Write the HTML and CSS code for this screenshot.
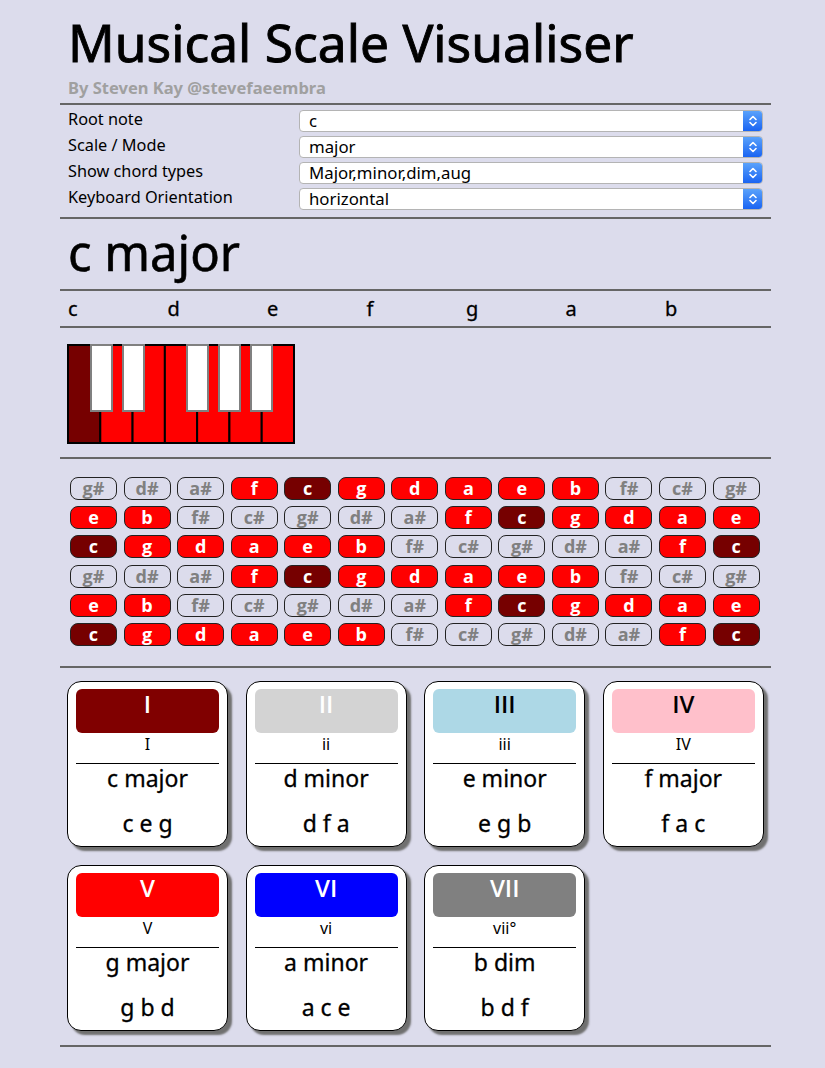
FILE: index.html
```html
<!DOCTYPE html>
<html lang="en">
<head>
<meta charset="utf-8">
<title>Musical Scale Visualiser</title>
<link rel="stylesheet" href="styles.css">
</head>
<body>
<div class="page">
  <header class="masthead">
    <h1 class="title">Musical Scale Visualiser</h1>
    <div class="byline">By Steven Kay @stevefaeembra</div>
  </header>
  <hr class="rule">
  <form class="controls">
    <div class="control-row">
      <label class="control-label">Root note</label>
      <div class="select"><select class="select-field"><option>c</option></select><span class="stepper"><svg width="12" height="16" viewBox="0 0 12 16"><path d="M3 6.5 L6 3.5 L9 6.5 M3 9.5 L6 12.5 L9 9.5" fill="none" stroke="#fff" stroke-width="1.6" stroke-linecap="round" stroke-linejoin="round"/></svg></span></div>
    </div>
    <div class="control-row">
      <label class="control-label">Scale / Mode</label>
      <div class="select"><select class="select-field"><option>major</option></select><span class="stepper"><svg width="12" height="16" viewBox="0 0 12 16"><path d="M3 6.5 L6 3.5 L9 6.5 M3 9.5 L6 12.5 L9 9.5" fill="none" stroke="#fff" stroke-width="1.6" stroke-linecap="round" stroke-linejoin="round"/></svg></span></div>
    </div>
    <div class="control-row">
      <label class="control-label">Show chord types</label>
      <div class="select"><select class="select-field"><option>Major,minor,dim,aug</option></select><span class="stepper"><svg width="12" height="16" viewBox="0 0 12 16"><path d="M3 6.5 L6 3.5 L9 6.5 M3 9.5 L6 12.5 L9 9.5" fill="none" stroke="#fff" stroke-width="1.6" stroke-linecap="round" stroke-linejoin="round"/></svg></span></div>
    </div>
    <div class="control-row">
      <label class="control-label">Keyboard Orientation</label>
      <div class="select"><select class="select-field"><option>horizontal</option></select><span class="stepper"><svg width="12" height="16" viewBox="0 0 12 16"><path d="M3 6.5 L6 3.5 L9 6.5 M3 9.5 L6 12.5 L9 9.5" fill="none" stroke="#fff" stroke-width="1.6" stroke-linecap="round" stroke-linejoin="round"/></svg></span></div>
    </div>
  </form>
  <hr class="rule">
  <h2 class="scale-name">c major</h2>
  <hr class="rule">
  <div class="scale-notes">
    <span class="scale-note">c</span><span class="scale-note">d</span><span class="scale-note">e</span><span class="scale-note">f</span><span class="scale-note">g</span><span class="scale-note">a</span><span class="scale-note">b</span>
  </div>
  <hr class="rule">
  <div class="keyboard">
    <svg width="228" height="100" viewBox="0 0 228 100">
      <g stroke="#000" stroke-width="2">
        <rect x="1" y="1" width="32.29" height="98" fill="#760000"/>
        <rect x="33.29" y="1" width="32.29" height="98" fill="#ff0000"/>
        <rect x="65.57" y="1" width="32.29" height="98" fill="#ff0000"/>
        <rect x="97.86" y="1" width="32.29" height="98" fill="#ff0000"/>
        <rect x="130.14" y="1" width="32.29" height="98" fill="#ff0000"/>
        <rect x="162.43" y="1" width="32.29" height="98" fill="#ff0000"/>
        <rect x="194.71" y="1" width="32.29" height="98" fill="#ff0000"/>
      </g>
      <g stroke="#808080" stroke-width="2" fill="#fff">
        <rect x="24" y="1" width="21" height="66"/>
        <rect x="56" y="1" width="21" height="66"/>
        <rect x="120" y="1" width="21" height="66"/>
        <rect x="152" y="1" width="21" height="66"/>
        <rect x="184" y="1" width="21" height="66"/>
      </g>
    </svg>
  </div>
  <hr class="rule">
  <div class="note-grid">
    <span class="pill">g#</span><span class="pill">d#</span><span class="pill">a#</span><span class="pill in">f</span><span class="pill root">c</span><span class="pill in">g</span><span class="pill in">d</span><span class="pill in">a</span><span class="pill in">e</span><span class="pill in">b</span><span class="pill">f#</span><span class="pill">c#</span><span class="pill">g#</span>
    <span class="pill in">e</span><span class="pill in">b</span><span class="pill">f#</span><span class="pill">c#</span><span class="pill">g#</span><span class="pill">d#</span><span class="pill">a#</span><span class="pill in">f</span><span class="pill root">c</span><span class="pill in">g</span><span class="pill in">d</span><span class="pill in">a</span><span class="pill in">e</span>
    <span class="pill root">c</span><span class="pill in">g</span><span class="pill in">d</span><span class="pill in">a</span><span class="pill in">e</span><span class="pill in">b</span><span class="pill">f#</span><span class="pill">c#</span><span class="pill">g#</span><span class="pill">d#</span><span class="pill">a#</span><span class="pill in">f</span><span class="pill root">c</span>
    <span class="pill">g#</span><span class="pill">d#</span><span class="pill">a#</span><span class="pill in">f</span><span class="pill root">c</span><span class="pill in">g</span><span class="pill in">d</span><span class="pill in">a</span><span class="pill in">e</span><span class="pill in">b</span><span class="pill">f#</span><span class="pill">c#</span><span class="pill">g#</span>
    <span class="pill in">e</span><span class="pill in">b</span><span class="pill">f#</span><span class="pill">c#</span><span class="pill">g#</span><span class="pill">d#</span><span class="pill">a#</span><span class="pill in">f</span><span class="pill root">c</span><span class="pill in">g</span><span class="pill in">d</span><span class="pill in">a</span><span class="pill in">e</span>
    <span class="pill root">c</span><span class="pill in">g</span><span class="pill in">d</span><span class="pill in">a</span><span class="pill in">e</span><span class="pill in">b</span><span class="pill">f#</span><span class="pill">c#</span><span class="pill">g#</span><span class="pill">d#</span><span class="pill">a#</span><span class="pill in">f</span><span class="pill root">c</span>
  </div>
  <hr class="rule">
  <div class="chords">
    <div class="card"><div class="card-head head-1">I</div><div class="card-numeral">I</div><hr class="card-rule"><div class="card-name">c major</div><div class="card-notes">c e g</div></div>
    <div class="card"><div class="card-head head-2">II</div><div class="card-numeral">ii</div><hr class="card-rule"><div class="card-name">d minor</div><div class="card-notes">d f a</div></div>
    <div class="card"><div class="card-head head-3">III</div><div class="card-numeral">iii</div><hr class="card-rule"><div class="card-name">e minor</div><div class="card-notes">e g b</div></div>
    <div class="card"><div class="card-head head-4">IV</div><div class="card-numeral">IV</div><hr class="card-rule"><div class="card-name">f major</div><div class="card-notes">f a c</div></div>
    <div class="card"><div class="card-head head-5">V</div><div class="card-numeral">V</div><hr class="card-rule"><div class="card-name">g major</div><div class="card-notes">g b d</div></div>
    <div class="card"><div class="card-head head-6">VI</div><div class="card-numeral">vi</div><hr class="card-rule"><div class="card-name">a minor</div><div class="card-notes">a c e</div></div>
    <div class="card"><div class="card-head head-7">VII</div><div class="card-numeral">vii°</div><hr class="card-rule"><div class="card-name">b dim</div><div class="card-notes">b d f</div></div>
  </div>
  <hr class="rule">
</div>
</body>
</html>
```
FILE: styles.css
```css
body {
  margin: 0;
  background: #dcdcec;
  font-family: "Noto Sans", "DejaVu Sans", sans-serif;
  color: #000;
}

.page {
  width: 711px;
  margin-left: 60px;
}

.masthead {
  padding: 16px 0 5px 8px;
}

.title {
  margin: 0;
  font-size: 51.5px;
  line-height: 52px;
  font-weight: normal;
  -webkit-text-stroke: 0.9px #000;
}

.byline {
  margin-top: 10px;
  font-size: 16.5px;
  line-height: 20px;
  font-weight: bold;
  color: #a0a0a0;
}

.rule {
  margin: 0;
  height: 0;
  border: 0;
  border-top: 2px solid #666;
}

.controls {
  margin: 0;
  padding: 3px 0 5px 8px;
}

.control-row {
  display: flex;
  align-items: flex-start;
  height: 26px;
}

.control-label {
  width: 231px;
  padding-top: 1px;
  font-size: 16.3px;
  line-height: 20px;
}

.select {
  display: flex;
  box-sizing: border-box;
  width: 464px;
  height: 22px;
  margin-top: 2px;
  background: #fff;
  border: 1px solid #b4b4b4;
  border-radius: 4px;
  overflow: hidden;
}

.select-field {
  flex: 1;
  appearance: none;
  -webkit-appearance: none;
  border: 0;
  background: transparent;
  font-family: "Noto Sans", "DejaVu Sans", sans-serif;
  font-size: 16.8px;
  height: 20px;
  line-height: 20px;
  padding: 0 0 0 9px;
  color: #000;
}

.stepper {
  width: 19px;
  display: flex;
  align-items: center;
  justify-content: center;
  background: linear-gradient(#5aa2fb, #1a64f2);
}

.scale-name {
  margin: 0;
  padding: 0 0 4px 8px;
  font-size: 49px;
  line-height: 66px;
  font-weight: normal;
  -webkit-text-stroke: 0.6px #000;
}

.scale-notes {
  display: flex;
  padding-left: 8px;
  height: 35px;
  font-size: 20px;
  line-height: 35px;
  -webkit-text-stroke: 0.3px #000;
}

.scale-note {
  width: 99.5px;
}

.keyboard {
  padding: 16px 0 13px 7px;
}

.keyboard svg {
  display: block;
}

.note-grid {
  display: grid;
  grid-template-columns: repeat(13, 47px);
  column-gap: 6.56px;
  row-gap: 6.2px;
  padding: 18px 0 20px 10px;
}

.pill {
  box-sizing: border-box;
  height: 23px;
  border: 1px solid #222;
  border-radius: 8px;
  text-align: center;
  font-family: "Open Sans", "Noto Sans", sans-serif;
  font-size: 18px;
  font-weight: bold;
  line-height: 20px;
  color: #808080;
}

.pill.in {
  background: #ff0000;
  color: #fff;
}

.pill.root {
  background: #760000;
  color: #fff;
}

.chords {
  display: grid;
  grid-template-columns: repeat(4, 161px);
  gap: 17.6px;
  padding: 13px 0 14px 7px;
}

.card {
  box-sizing: border-box;
  height: 166px;
  padding: 7px 8px 0;
  background: #fff;
  border: 1px solid #000;
  border-radius: 14px;
  box-shadow: 4px 4px 2px #707070;
  text-align: center;
}

.card-head {
  height: 44px;
  border-radius: 6px;
  font-family: "Open Sans", "Noto Sans", sans-serif;
  font-size: 24px;
  font-weight: 600;
  line-height: 29px;
  color: #fff;
}

.head-1 { background: #800000; }
.head-2 { background: #d3d3d3; }
.head-3 { background: #add8e6; color: #000; }
.head-4 { background: #ffc0cb; color: #000; }
.head-5 { background: #ff0000; }
.head-6 { background: #0000ff; }
.head-7 { background: #808080; }

.card-numeral {
  font-size: 16px;
  line-height: 22px;
}

.card-rule {
  margin: 8px 0 0;
  height: 0;
  border: 0;
  border-top: 1px solid #000;
}

.card-name {
  font-size: 23px;
  line-height: 28px;
  -webkit-text-stroke: 0.3px #000;
}

.card-notes {
  margin-top: 17px;
  font-size: 23px;
  line-height: 28px;
  -webkit-text-stroke: 0.3px #000;
}
```
